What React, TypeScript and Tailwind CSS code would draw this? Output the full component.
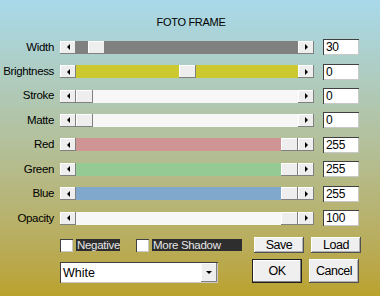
import type { ReactNode } from 'react'

type Row = { label: string; value: string; track: string; thumb: number | null }

// thumb = px from left edge of track, null = pinned to the right end
const rows: Row[] = [
  { label: 'Width',      value: '30',  track: 'bg-[#808080]', thumb: 12 },
  { label: 'Brightness', value: '0',   track: 'bg-[#cbc830]', thumb: 103 },
  { label: 'Stroke',     value: '0',   track: 'bg-[#f7f7f7]', thumb: 0 },
  { label: 'Matte',      value: '0',   track: 'bg-[#f7f7f7]', thumb: 0 },
  { label: 'Red',        value: '255', track: 'bg-[#cf9494]', thumb: null },
  { label: 'Green',      value: '255', track: 'bg-[#95ca94]', thumb: null },
  { label: 'Blue',       value: '255', track: 'bg-[#80a8cc]', thumb: null },
  { label: 'Opacity',    value: '100', track: 'bg-[#f7f7f7]', thumb: null },
]

const raised = 'bg-[#eeeeee] shadow-[inset_-1px_-1px_0_#808080,inset_1px_1px_0_#ffffff]'
const sunken = 'bg-white shadow-[inset_1px_1px_0_#404040,inset_-1px_-1px_0_#c8c8c8]'
const font = "font-['Liberation_Sans',Arial,sans-serif]"

function ArrowLeft() {
  return <span className="w-0 h-0 border-y-[3px] border-y-transparent border-r-[3px] border-r-black" />
}

function ArrowRight() {
  return <span className="w-0 h-0 border-y-[3px] border-y-transparent border-l-[3px] border-l-black" />
}

function Slider({ track, thumb }: { track: string; thumb: number | null }) {
  return (
    <div className="flex h-[13px] w-[254px]">
      <div className={`w-[16px] h-full flex items-center justify-center ${raised}`}>
        <ArrowLeft />
      </div>
      <div className={`relative flex-1 h-full ${track}`}>
        <div
          className={`absolute top-0 h-full w-[17px] ${raised} ${thumb === null ? 'right-0' : ''}`}
          style={thumb === null ? undefined : { left: thumb }}
        />
      </div>
      <div className={`w-[16px] h-full flex items-center justify-center ${raised}`}>
        <ArrowRight />
      </div>
    </div>
  )
}

function WinButton({ children, isDefault }: { children: ReactNode; isDefault?: boolean }) {
  return (
    <div
      className={`w-[50px] flex items-center justify-center text-[12.5px] tracking-[-0.5px] text-black bg-[#efefef] ${
        isDefault
          ? 'h-[24px] border border-[#202020] shadow-[inset_-1px_-1px_0_#808080,inset_1px_1px_0_#ffffff]'
          : 'h-full shadow-[inset_-1px_-1px_0_#505050,inset_1px_1px_0_#ffffff,inset_-2px_-2px_0_#b0b0b0]'
      }`}
    >
      {children}
    </div>
  )
}

function Check({ label, width }: { label: string; width: string }) {
  return (
    <div className="flex items-center">
      <div className={`w-[13px] h-[13px] ${sunken}`} />
      <span className={`ml-[3px] h-[12px] ${width} bg-[#2e2e2e] text-[#e6e6e6] text-[11.5px] leading-[12px] px-[1px] tracking-[-0.3px] whitespace-nowrap`}>
        {label}
      </span>
    </div>
  )
}

export default function App() {
  return (
    <div className={`w-[380px] h-[296px] overflow-hidden bg-gradient-to-b from-[#a8d9ea] to-[#bba22c] ${font} text-black`}>
      {/* Title */}
      <div className="pt-[15px] h-[35px] pl-[2px] text-center text-[11px] leading-[14px] tracking-[-0.3px]">FOTO FRAME</div>

      {/* Slider rows */}
      <div className="flex flex-col">
        {rows.map(r => (
          <div key={r.label} className="h-[24.43px] flex items-center">
            <span className="w-[54px] text-right text-[11.5px] tracking-[-0.35px]">{r.label}</span>
            <div className="ml-[6px]">
              <Slider track={r.track} thumb={r.thumb} />
            </div>
            <div className={`ml-[9px] w-[36px] h-[16px] pl-[3px] text-[12px] leading-[16px] tracking-[-0.3px] ${sunken}`}>{r.value}</div>
          </div>
        ))}
      </div>

      {/* Checkboxes + Save / Load */}
      <div className="mt-[7px] h-[16px] flex items-center pl-[60px]">
        <Check label="Negative" width="w-[44px]" />
        <div className="ml-[16px]">
          <Check label="More Shadow" width="w-[90px]" />
        </div>
        <div className="ml-[12px] h-full flex gap-[7px]">
          <WinButton>Save</WinButton>
          <WinButton>Load</WinButton>
        </div>
      </div>

      {/* Colour select + OK / Cancel */}
      <div className="mt-[6px] flex items-start pl-[60px]">
        <div className={`mt-[3px] w-[158px] h-[21px] flex items-center justify-between pl-[3px] pr-[1px] text-[12.5px] ${sunken}`}>
          <span>White</span>
          <div className={`w-[16px] h-[19px] flex items-center justify-center ${raised}`}>
            <span className="w-0 h-0 border-x-[3px] border-x-transparent border-t-[3px] border-t-black" />
          </div>
        </div>
        <div className="ml-[34px] flex gap-[7px]">
          <WinButton isDefault>OK</WinButton>
          <div className="h-[24px]">
            <WinButton>Cancel</WinButton>
          </div>
        </div>
      </div>
    </div>
  )
}
